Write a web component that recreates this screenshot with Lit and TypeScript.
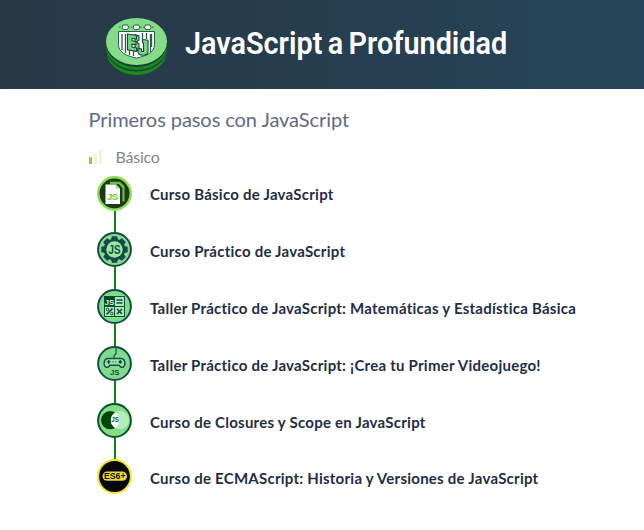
import { LitElement, html, svg, css, nothing } from "lit";
import { customElement } from "lit/decorators.js";

const js = (x: number, y: number, size: number, fill: string) =>
  svg`<text class="glyph" x=${x} y=${y} font-size=${size} fill=${fill} text-anchor="middle">JS</text>`;

const disc = (stroke: string, fill: string, width = 2) =>
  svg`<circle cx="17.5" cy="17.5" r=${17.4 - width / 2} fill=${fill} stroke=${stroke} stroke-width=${width} />`;

const teeth = [0, 45, 90, 135, 180, 225, 270, 315];

const courses = [
  {
    name: "Curso Básico de JavaScript",
    icon: svg`${disc("#86e04f", "#203818", 2.4)}
      <path d="M13 5.8H23l4.5 4.5v15.2h-2V12L22 8.300h-9z" fill="#5fc943"/>
      <path d="M8.500 8.500h10.500l4 4v15.500H8.500z" fill="#fff"/>
      <path d="M19 8.500v4H23z" fill="#8edb77"/>
      <text class="glyph" x="10" y="23.800" font-size="9.500" textLength="11" fill="#67cf36">JS</text>`,
  },
  {
    name: "Curso Práctico de JavaScript",
    icon: svg`${disc("#15494a", "#86dd8b", 2)}
      ${teeth.map((a) => svg`<path d="M14.8 4.300h5.400l1.300 6h-8z" fill="#15494a" transform="rotate(${a} 17.5 17.5)"/>`)}
      <circle cx="17.5" cy="17.5" r="10.8" fill="#15494a"/>
      <circle cx="17.5" cy="17.5" r="8.2" fill="#98e99b"/>
      <text class="glyph" x="11.500" y="21.800" font-size="12" textLength="12" lengthAdjust="spacingAndGlyphs" fill="#15494a">JS</text>`,
  },
  {
    name: "Taller Práctico de JavaScript: Matemáticas y Estadística Básica",
    icon: svg`${disc("#154c44", "#7fdd8a", 2)}
      <rect x="7.5" y="7.5" width="20" height="20" fill="#a6edac" stroke="#154c44" stroke-width="1"/>
      <rect x="7.5" y="7.5" width="10" height="10" fill="#07462c"/>
      <path d="M17.5 7.5v20M7.5 17.5h20" stroke="#154c44"/>
      ${js(12.5, 15.6, 8, "#c8f8cd")}
      <path d="M19.500 11h6M19.500 14h6" stroke="#154c44" stroke-width="1.400"/>
      <path d="M9.500 25.500l6-6M20 20l5 5m0-5l-5 5" stroke="#154c44" stroke-width="1.700"/>
      <circle cx="10.500" cy="20.500" r="1.300" fill="none" stroke="#154c44"/>
      <circle cx="14.800" cy="24.600" r="1.300" fill="none" stroke="#154c44"/>`,
  },
  {
    name: "Taller Práctico de JavaScript: ¡Crea tu Primer Videojuego!",
    icon: svg`${disc("#154f49", "#80dc8b", 2)}
      <path d="M19 1.500v6.200l-2 2v3" fill="none" stroke="#154f49" stroke-width="1.200"/>
      <path d="M11 12.500h13c2.800 0 3.900 3 3.900 5.400 0 3-2.900 4.500-4.700 2.500l-1-1.200h-9.400l-1 1.200c-1.800 2-4.700.5-4.700-2.500 0-2.400 1.100-5.400 3.900-5.400z" fill="#9be8a2" stroke="#154f49" stroke-width="1.500"/>
      <path d="M11.700 13.900v4M9.700 15.900h4" stroke="#154f49" stroke-width="1.300"/>
      <path d="M23.300 13.700l2.200 2.200-2.200 2.200-2.200-2.200z" fill="#154f49"/>
      <path d="M15.500 15.900h1.300m1.300 0h1.300" stroke="#154f49"/>
      <text class="glyph" x="13" y="28.800" font-size="7.800" textLength="9.500" fill="#154f49">JS</text>`,
  },
  {
    name: "Curso de Closures y Scope en JavaScript",
    icon: svg`${disc("#075626", "#84dc88", 2)}
      <circle cx="13.200" cy="17.200" r="9.100" fill="#004408"/>
      <circle cx="23" cy="17.200" r="9.100" fill="#b5ecb9"/>
      <path d="M18.100 9.500a9.100 9.100 0 0 1 0 15.400a9.100 9.100 0 0 1 0-15.400z" fill="#fff"/>
      ${js(18, 19.400, 6.300, "#075626")}`,
  },
  {
    name: "Curso de ECMAScript: Historia y Versiones de JavaScript",
    icon: svg`${disc("#f6e51c", "#050505", 2)}
      <rect x="5.500" y="12.600" width="24.500" height="9.200" rx="4.600" fill="#e6d93a"/>
      <text class="glyph" x="7" y="20.400" font-size="8.800" textLength="21.500" lengthAdjust="spacingAndGlyphs" fill="#151500">ES6+</text>`,
  },
];

@customElement("app-root")
export class AppRoot extends LitElement {
  static styles = css`
    :host { display: block; height: 530px; background: #fff; font-family: Lato, "Liberation Sans", sans-serif; overflow: hidden; }
    header { height: 89px; display: flex; box-sizing: border-box; padding-left: 105px; background: linear-gradient(90deg, #273845, #264459); }
    .badge { width: 64px; height: 62px; margin-top: 16px; flex: none; }
    h1 { margin: 23px 0 0 16px; height: 40px; font: 600 32px/40px Roboto, sans-serif; word-spacing: -2px; color: #fff; white-space: nowrap; transform: scaleX(.9); transform-origin: left; }
    main { padding: 17px 0 0 88.500px; }
    h2 { margin: 0; font-size: 20px; line-height: 26px; font-weight: 400; letter-spacing: -.07px; color: #5f6b86; }
    .level { display: flex; align-items: center; gap: 14px; margin-top: 14px; height: 22px; font-size: 16px; letter-spacing: -.22px; color: #838791; }
    .level span { margin-top: -2px; }
    .bars { width: 13px; height: 14px; }
    ul { list-style: none; margin: 7.500px 0 0 8.500px; padding: 0; }
    li { display: flex; height: 56.800px; gap: 18px; }
    .track { width: 35px; display: flex; flex-direction: column; align-items: center; }
    .icon { width: 35px; height: 35px; flex: none; display: block; }
    .line { flex: 1; width: 2px; background: #108018; }
    .name { margin-top: -.1px; font-size: 15px; line-height: 38px; font-weight: 700; letter-spacing: .245px; color: #1f2e46; white-space: nowrap; }
    .glyph { font-family: "Liberation Sans", sans-serif; font-weight: 700; }
  `;

  render() {
    return html`
      <header>
        <svg class="badge" viewBox="0 0 64 62">
          <ellipse cx="31.500" cy="35.500" rx="30" ry="23.500" fill="#158a20"/>
          <ellipse cx="31.500" cy="32" rx="30.500" ry="23.500" fill="#203d37"/>
          <ellipse cx="31.500" cy="30.500" rx="30.500" ry="23.500" fill="#158a20"/>
          <ellipse cx="31.500" cy="27.500" rx="30.500" ry="23.500" fill="#203d37"/>
          <ellipse cx="31.500" cy="25.500" rx="30.500" ry="23.500" fill="#85dc88"/>
          <path d="M14 11.200h35" stroke="#285d49" stroke-dasharray="1.500 1.500"/>
          <g fill="#fff" stroke="#285d49" stroke-width="1">
            <path d="M18 9h4.500l1 2.200-1 2.200H18l-1-2.200zM29.200 9h4.500l1 2.200-1 2.200h-4.500l-1-2.200zM40.500 9H45l1 2.200-1 2.200h-4.500l-1-2.200z"/>
            <path d="M13.500 15.500h36v13c0 8-8 11.500-18 13.500-10-2-18-5.500-18-13.500z"/>
          </g>
          <path d="M17 18v16M20.500 18v19M37.500 17v6M41.500 17v6M45.500 18v18M24.500 34v5M28.500 35v5M46.500 18v13" stroke="#285d49" stroke-width="1.300"/>
          <g fill="#79d680" stroke="#17483f" stroke-width="1.100">
            <path d="M30 18.500l4 1.500v4l-2.500 2 2.500 2v6l-4 1z"/>
            <path d="M22.500 18l9 1.500v3.500l-4.500-.7v2.500l4 .6v3.300l-4-.6v3l4.500.8v3.500l-9-1.500z"/>
            <path d="M37.500 23.500l5.500.8v11.500c0 4.500-10 4.500-10 0v-3.300l3.500.5v2.500h2v-8.500l-1-.2z"/>
          </g>
        </svg>
        <h1>JavaScript a Profundidad</h1>
      </header>
      <main>
        <h2>Primeros pasos con JavaScript</h2>
        <div class="level">
          <svg class="bars" viewBox="0 0 13 14">
            <rect y="7" width="3" height="7" rx=".5" fill="#98ca3f"/>
            <rect x="5" y="4" width="3" height="10" rx=".5" fill="#e9f4d9"/>
            <rect x="10" width="3" height="14" rx=".5" fill="#e9f4d9"/>
          </svg>
          <span>Básico</span>
        </div>
        <ul>
          ${courses.map(
            (c, i) => html`<li>
              <div class="track">
                <svg class="icon" viewBox="0 0 35 35">${c.icon}</svg>
                ${i < courses.length - 1 ? html`<div class="line"></div>` : nothing}
              </div>
              <span class="name">${c.name}</span>
            </li>`
          )}
        </ul>
      </main>`;
  }
}
